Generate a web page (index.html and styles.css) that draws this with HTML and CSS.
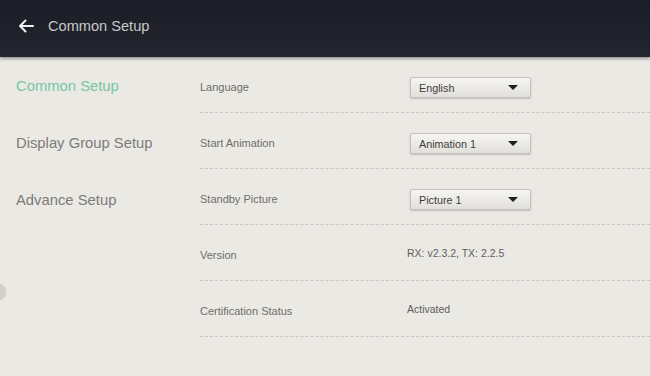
FILE: index.html
```html
<!DOCTYPE html>
<html lang="en">
<head>
    <meta charset="UTF-8">
    <meta name="viewport" content="width=device-width, initial-scale=1.0">
    <title>Common Setup</title>
    <link rel="stylesheet" href="styles.css">
</head>
<body>
    <div class="header">
        <svg class="back" width="16" height="14" viewBox="0 0 16 14">
            <path d="M15 7H2M7.5 1.5L2 7l5.5 5.5" fill="none" stroke="#f2f2f2" stroke-width="2" stroke-linecap="round" stroke-linejoin="round"/>
        </svg>
        <span class="title">Common Setup</span>
    </div>

    <div class="main">
        <div class="sidebar">
            <div class="menu-item active">Common Setup</div>
            <div class="menu-item">Display Group Setup</div>
            <div class="menu-item">Advance Setup</div>
            <div class="knob"></div>
        </div>

        <div class="settings">
            <div class="row">
                <span class="label">Language</span>
                <div class="select"><span>English</span><span class="caret"></span></div>
            </div>
            <div class="row">
                <span class="label">Start Animation</span>
                <div class="select"><span>Animation 1</span><span class="caret"></span></div>
            </div>
            <div class="row">
                <span class="label">Standby Picture</span>
                <div class="select"><span>Picture 1</span><span class="caret"></span></div>
            </div>
            <div class="row">
                <span class="label">Version</span>
                <span class="value">RX: v2.3.2, TX: 2.2.5</span>
            </div>
            <div class="row">
                <span class="label">Certification Status</span>
                <span class="value">Activated</span>
            </div>
        </div>
    </div>
</body>
</html>
```

FILE: styles.css
```css
body {
    margin: 0;
    font-family: "Liberation Sans", Arial, sans-serif;
    background-color: #ebe9e4;
    height: 376px;
    overflow: hidden;
}
.header {
    height: 57px;
    display: flex;
    align-items: center;
    padding-left: 18px;
    background: linear-gradient(to bottom, #1a1d26, #23262f);
    box-shadow: 0 2px 3px rgba(0,0,0,0.35);
    box-sizing: border-box;
}
.back {
    margin-right: 14px;
    margin-top: -6px;
}
.title {
    color: #c9c9c9;
    font-size: 14.6px;
    margin-top: -6px;
}
.main {
    display: flex;
}
.sidebar {
    width: 200px;
    padding-left: 16px;
    box-sizing: border-box;
    position: relative;
}
.menu-item {
    height: 57px;
    line-height: 58px;
    font-size: 14.8px;
    color: #7c7b78;
}
.menu-item.active {
    color: #74c6a4;
}
.knob {
    position: absolute;
    left: -6px;
    top: 227px;
    width: 12px;
    height: 16px;
    border-radius: 50%;
    background-color: #d2d0cb;
}
.settings {
    flex: 1;
}
.row {
    height: 55px;
    display: flex;
    align-items: center;
    border-bottom: 1px dashed #c9c7c2;
}
.label {
    width: 207px;
    font-size: 11px;
    color: #6e6d6a;
    padding-top: 5px;
}
.value {
    font-size: 10.5px;
    color: #5f5e5b;
    margin-top: 0;
}
.select {
    margin-left: 3px;
    width: 121px;
    height: 21px;
    box-sizing: border-box;
    display: flex;
    align-items: center;
    justify-content: space-between;
    padding: 0 12px 0 8px;
    font-size: 10.8px;
    color: #3e3d3b;
    background: linear-gradient(to bottom, #f6f5f1, #e2e0db);
    border: 1px solid #c4c2bd;
    border-radius: 2px;
    box-shadow: 0 1px 2px rgba(0,0,0,0.2);
    margin-top: 6px;
}
.caret {
    width: 0;
    height: 0;
    border-left: 5px solid transparent;
    border-right: 5px solid transparent;
    border-top: 5px solid #1e1e1e;
}
```
